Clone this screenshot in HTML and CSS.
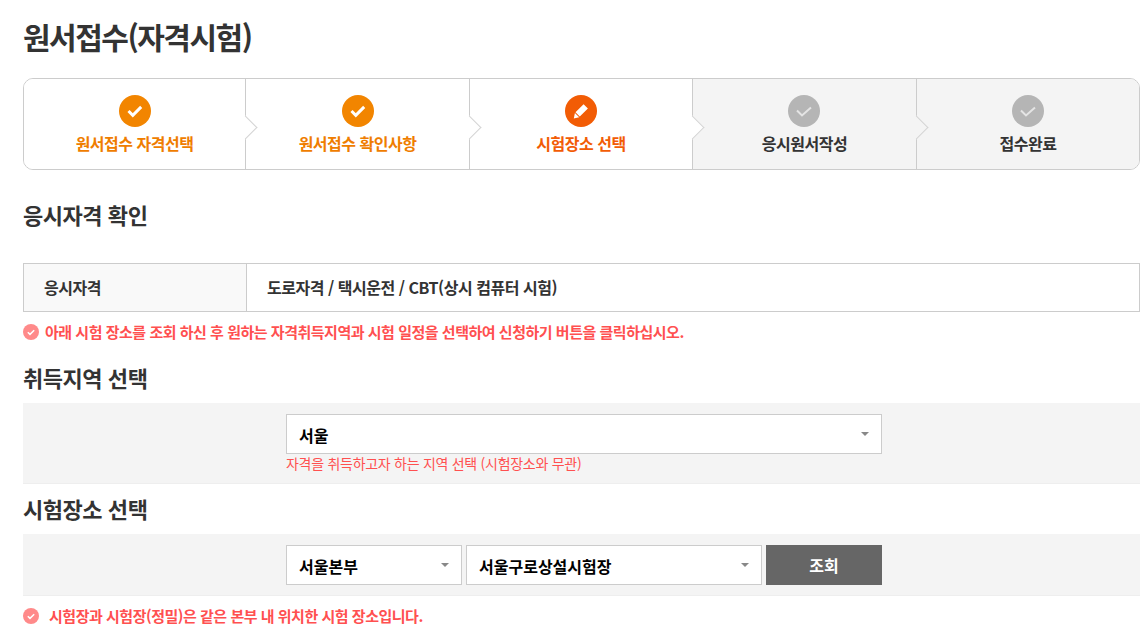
FILE: index.html
```html
<!DOCTYPE html>
<html lang="ko">
<head>
<meta charset="utf-8">
<title>원서접수(자격시험)</title>
<link rel="stylesheet" href="styles.css">
</head>
<body>
<main class="page">
  <h1 class="title">원서접수(자격시험)</h1>
  <ol class="steps">
    <li class="step done">
      <svg class="step-icon" viewBox="0 0 32 32"><circle cx="16" cy="16" r="16" class="disc"/><path d="M9.5 16l4.3 4.3 8.4-8.4" class="tick"/></svg>
      <span class="step-label">원서접수 자격선택</span>
    </li>
    <li class="step done">
      <svg class="step-icon" viewBox="0 0 32 32"><circle cx="16" cy="16" r="16" class="disc"/><path d="M9.5 16l4.3 4.3 8.4-8.4" class="tick"/></svg>
      <span class="step-label">원서접수 확인사항</span>
    </li>
    <li class="step current">
      <svg class="step-icon" viewBox="0 0 32 32"><circle cx="16" cy="16" r="16" class="disc"/><path d="M18.6 9.2l4.3 4.3-8.1 8.1-4.3-4.3zM9.9 17.9l4.3 4.3-5.4 1.2z" class="pen"/></svg>
      <span class="step-label">시험장소 선택</span>
    </li>
    <li class="step todo">
      <svg class="step-icon" viewBox="0 0 32 32"><circle cx="16" cy="16" r="16" class="disc"/><path d="M9 15.5l5 5 9-8" class="tick"/></svg>
      <span class="step-label">응시원서작성</span>
    </li>
    <li class="step todo last">
      <svg class="step-icon" viewBox="0 0 32 32"><circle cx="16" cy="16" r="16" class="disc"/><path d="M9 15.5l5 5 9-8" class="tick"/></svg>
      <span class="step-label">접수완료</span>
    </li>
  </ol>

  <h2 class="heading heading-first">응시자격 확인</h2>
  <div class="info">
    <div class="info-key">응시자격</div>
    <div class="info-value">도로자격 / 택시운전 / CBT(상시 컴퓨터 시험)</div>
  </div>
  <p class="notice notice-top">
    <svg class="notice-icon" viewBox="0 0 16 16"><circle cx="8" cy="8" r="8" class="notice-disc"/><path d="M4.8 8.2l2.2 2.2 4.2-4.2" class="notice-tick"/></svg>
    <span>아래 시험 장소를 조회 하신 후 원하는 자격취득지역과 시험 일정을 선택하여 신청하기 버튼을 클릭하십시오.</span>
  </p>

  <h2 class="heading heading-region">취득지역 선택</h2>
  <section class="panel panel-region">
    <div class="field">
      <div class="select select-wide">서울<i class="caret"></i></div>
      <p class="hint">자격을 취득하고자 하는 지역 선택 (시험장소와 무관)</p>
    </div>
  </section>

  <h2 class="heading heading-place">시험장소 선택</h2>
  <section class="panel panel-place">
    <div class="select select-hq">서울본부<i class="caret"></i></div>
    <div class="select select-site">서울구로상설시험장<i class="caret"></i></div>
    <button class="search" type="button">조회</button>
  </section>
  <p class="notice notice-bottom">
    <svg class="notice-icon" viewBox="0 0 16 16"><circle cx="8" cy="8" r="8" class="notice-disc"/><path d="M4.8 8.2l2.2 2.2 4.2-4.2" class="notice-tick"/></svg>
    <span>시험장과 시험장(정밀)은 같은 본부 내 위치한 시험 장소입니다.</span>
  </p>
</main>
</body>
</html>
```
FILE: styles.css
```css
* { box-sizing: border-box; }
html, body { margin: 0; padding: 0; background: #fff; overflow: hidden; }
body {
  height: 635px;
  font-family: "Noto Sans CJK KR", "Noto Sans", sans-serif;
  color: #333;
}
.page { padding: 0 7px 0 23px; }
.title {
  margin: 0;
  padding-top: 14px;
  height: 78px;
  font-size: 30px;
  line-height: 44px;
  font-weight: 700;
  letter-spacing: -1.5px;
}
.steps {
  display: grid;
  grid-template-columns: 222px 224px 223px 224px 1fr;
  margin: 0;
  padding: 0;
  list-style: none;
  height: 92px;
  border: 1px solid #ccc;
  border-radius: 10px;
}
.step {
  position: relative;
  display: flex;
  flex-direction: column;
  align-items: center;
  padding-top: 16px;
  border-right: 1px solid #ccc;
  background: #fff;
}
.step:first-child { border-radius: 9px 0 0 9px; }
.step.last { border-right: 0; border-radius: 0 9px 9px 0; }
.step.todo { background: #f4f4f4; }
.step:not(.last)::after {
  content: "";
  position: absolute;
  top: 40px;
  right: -9px;
  width: 16px;
  height: 16px;
  border-top: 1px solid #d4d4d4;
  border-right: 1px solid #d4d4d4;
  background: inherit;
  transform: rotate(45deg);
  z-index: 1;
}
.step-icon { width: 32px; height: 32px; display: block; }
.todo:not(.last) .step-icon { margin-left: -1px; }
.step-label {
  margin-top: 4px;
  font-size: 16px;
  line-height: 24px;
  font-weight: 700;
  letter-spacing: -0.5px;
}
.done .disc { fill: #f28500; }
.done .step-label { color: #ef7d00; }
.current .disc { fill: #f25c05; }
.current .step-label { color: #f25c05; }
.todo .disc { fill: #b5b5b5; }
.todo .step-label { color: #333; }
.tick { fill: none; stroke: #fff; stroke-width: 3; }
.todo .tick { stroke: #e4e4e4; stroke-width: 2; }
.pen { fill: #fff; }
.heading {
  margin: 0;
  font-size: 22px;
  line-height: 30px;
  font-weight: 700;
  letter-spacing: -0.45px;
}
.heading-first { padding-top: 29px; height: 93px; }
.info {
  display: flex;
  height: 49px;
  border: 1px solid #ccc;
  font-size: 16px;
  letter-spacing: -0.47px;
  font-weight: 700;
  line-height: 46px;
}
.info-key {
  width: 223px;
  padding-left: 20px;
  background: #f9f9f9;
  border-right: 1px solid #ccc;
}
.info-value { padding-left: 20px; }
.notice {
  display: flex;
  align-items: center;
  margin: 0;
  font-size: 15px;
  letter-spacing: -0.48px;
  line-height: 20px;
  font-weight: 700;
  color: #ff5050;
}
.notice-top { height: 20px; margin-top: 10px; gap: 6px; }
.notice-bottom { height: 20px; margin-top: 10px; gap: 10px; }
.notice-icon { width: 16px; height: 16px; flex: none; }
.notice-disc { fill: #ff8a8a; }
.notice-tick { fill: none; stroke: #fff; stroke-width: 1.5; }
.heading-region { margin-top: 20px; height: 41px; }
.heading-place { height: 50px; padding-top: 9px; }
.panel {
  display: flex;
  padding-left: 263px;
  background: #f4f4f4;
  border-bottom: 1px solid #eee;
}
.panel-region { height: 81px; padding-top: 11px; }
.panel-place { height: 62px; padding-top: 11px; gap: 4px; }
.field { width: 596px; }
.select {
  position: relative;
  height: 40px;
  padding-left: 12px;
  background: #fff;
  border: 1px solid #ccc;
  font-size: 16px;
  line-height: 40px;
  font-weight: 700;
  color: #000;
}
.select-wide { width: 596px; }
.select-hq { width: 176px; }
.select-site { width: 296px; }
.caret {
  position: absolute;
  top: 17px;
  right: 12px;
  width: 0;
  height: 0;
  border-left: 4px solid transparent;
  border-right: 4px solid transparent;
  border-top: 4px solid #888;
}
.hint {
  margin: 0;
  font-size: 14px;
  letter-spacing: -0.28px;
  line-height: 18px;
  color: #ff5050;
}
.search {
  width: 116px;
  height: 40px;
  margin-left: 0;
  border: 0;
  padding: 0;
  background: #666;
  color: #fff;
  font: 700 16px/40px "Noto Sans CJK KR", sans-serif;
}
```
